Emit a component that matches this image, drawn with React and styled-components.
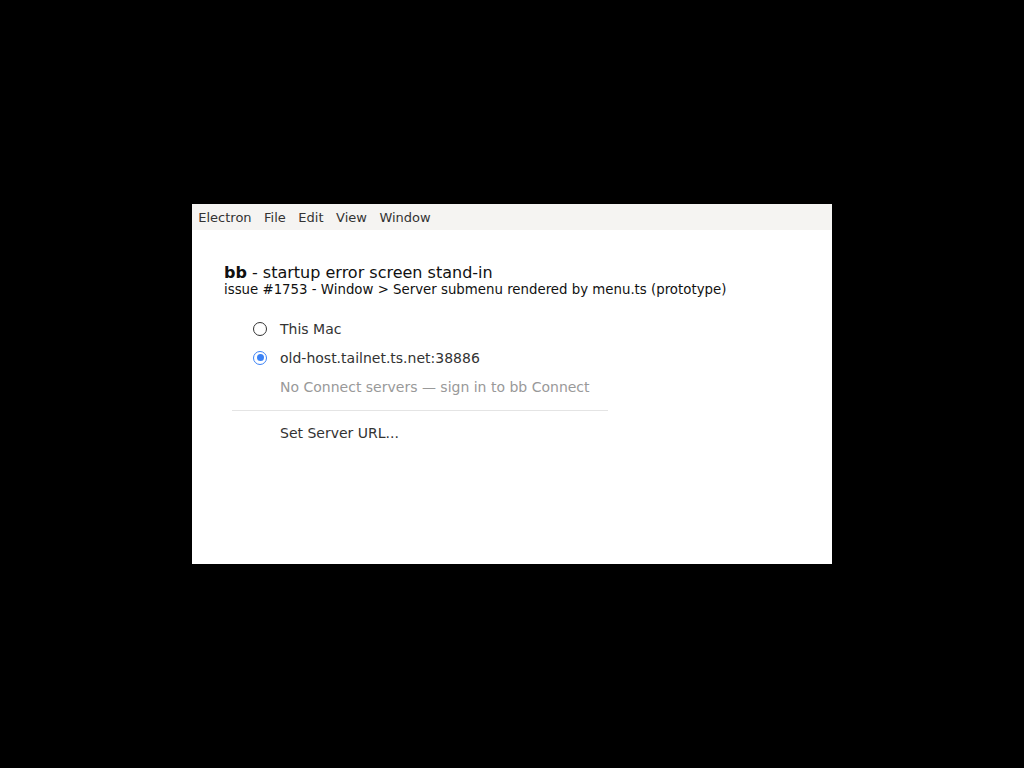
import styled, { createGlobalStyle } from 'styled-components'

const Global = createGlobalStyle`
  html, body { margin: 0; padding: 0; background: #000; }
  body { font-family: "DejaVu Sans", sans-serif; }
`

const Screen = styled.div`
  width: 1024px;
  height: 768px;
  display: flex;
  align-items: center;
  justify-content: center;
`

const Window = styled.div`
  width: 640px;
  height: 360px;
  background: #fff;
  display: flex;
  flex-direction: column;
`

const MenuBar = styled.div`
  height: 26px;
  background: #f5f4f2;
  display: flex;
  align-items: center;
`

const MenuItem = styled.span`
  font-size: 13px;
  color: #333;
  padding: 0 6.25px;
`

const Body = styled.div`
  padding: 34px 32px 0 32px;
`

const Title = styled.div`
  font-size: 16px;
  color: #111;
  line-height: 18px;
  b { font-weight: 700; }
`

const Sub = styled.div`
  font-size: 13.33px;
  color: #111;
  line-height: 16px;
`

const Menu = styled.div`
  margin-top: 16px;
  margin-left: 8px;
  width: 376px;
  display: flex;
  flex-direction: column;
`

const Row = styled.div`
  height: 29px;
  display: flex;
  align-items: center;
  padding-left: 21px;
  gap: 13px;
  font-size: 14px;
  white-space: nowrap;
  color: ${({ $muted }) => ($muted ? '#999' : '#333')};
`

const Label = styled.span`
  padding-left: ${({ $indent }) => ($indent ? '27px' : '0')};
`

const Radio = styled.span`
  width: 14px;
  height: 14px;
  box-sizing: border-box;
  border-radius: 50%;
  border: 1.5px solid ${({ $on }) => ($on ? '#3b82f6' : '#333')};
  display: flex;
  align-items: center;
  justify-content: center;
  &::after {
    content: '';
    width: 7px;
    height: 7px;
    border-radius: 50%;
    background: #3b82f6;
    display: ${({ $on }) => ($on ? 'block' : 'none')};
  }
`

const Sep = styled.div`
  height: 1px;
  background: #e4e4e4;
  margin: 9px 0 7px;
`

const App = () => {
  return (
    <Screen>
      <Global />
      <Window>
        <MenuBar>
          <MenuItem>Electron</MenuItem>
          <MenuItem>File</MenuItem>
          <MenuItem>Edit</MenuItem>
          <MenuItem>View</MenuItem>
          <MenuItem>Window</MenuItem>
        </MenuBar>
        <Body>
          <Title><b>bb</b> - startup error screen stand-in</Title>
          <Sub>issue #1753 - Window &gt; Server submenu rendered by menu.ts (prototype)</Sub>
          <Menu>
            <Row><Radio /><span>This Mac</span></Row>
            <Row><Radio $on /><span>old-host.tailnet.ts.net:38886</span></Row>
            <Row $muted><Label $indent>No Connect servers — sign in to bb Connect</Label></Row>
            <Sep />
            <Row><Label $indent>Set Server URL...</Label></Row>
          </Menu>
        </Body>
      </Window>
    </Screen>
  )
}

export default App
